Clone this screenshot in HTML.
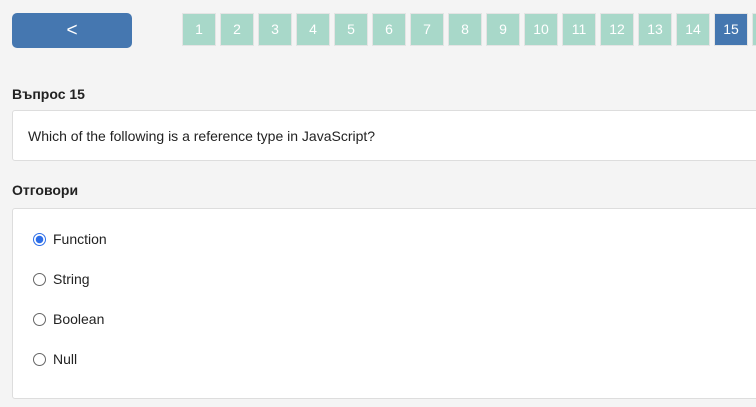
<!DOCTYPE html><html><head><style>
body{margin:0;background:#f4f4f4;font-family:"Liberation Sans",Arial,sans-serif;width:756px;height:407px;overflow:hidden;position:relative}
.btn{position:absolute;left:12px;top:13px;width:120px;height:35px;background:#4577b0;border-radius:5px;color:#fff;font-size:19px;text-align:center;line-height:35px}
.p{position:absolute;top:13px;width:32px;height:31px;border:1px solid #e4e4e4;background:#a8d8c9;color:#fff;font-size:14px;text-align:center;line-height:31px}
.p.a{background:#4577b0}
h3{position:absolute;left:12px;margin:0;font-size:14px;font-weight:bold;color:#222}
.box{position:absolute;left:12px;width:760px;background:#fff;border:1px solid #ddd;border-radius:3px}
.q{font-size:14px;color:#222}
.r{position:absolute;left:20px;font-size:14px;color:#222}
.r i{display:inline-block;width:13px;height:13px;border:1px solid #666;border-radius:50%;vertical-align:-2px;margin-right:7px;background:#fff;box-sizing:border-box}
.r i.c{border:1.5px solid #2d6ee8;background:radial-gradient(circle,#2d6ee8 0 3.5px,#fff 4px)}
</style></head><body>
<div class="btn">&lt;</div>
<div class="p" style="left:182px">1</div><div class="p" style="left:220px">2</div><div class="p" style="left:258px">3</div><div class="p" style="left:296px">4</div><div class="p" style="left:334px">5</div><div class="p" style="left:372px">6</div><div class="p" style="left:410px">7</div><div class="p" style="left:448px">8</div><div class="p" style="left:486px">9</div><div class="p" style="left:524px">10</div><div class="p" style="left:562px">11</div><div class="p" style="left:600px">12</div><div class="p" style="left:638px">13</div><div class="p" style="left:676px">14</div><div class="p a" style="left:714px">15</div><div class="p" style="left:752px"></div>
<h3 style="top:86px">Въпрос 15</h3>
<div class="box q" style="top:110px;height:51px;line-height:51px;padding-left:15px;box-sizing:border-box">Which of the following is a reference type in JavaScript?</div>
<h3 style="top:182px">Отговори</h3>
<div class="box" style="top:208px;height:191px;box-sizing:border-box">
<div class="r" style="top:22px"><i class="c"></i>Function</div>
<div class="r" style="top:62px"><i></i>String</div>
<div class="r" style="top:102px"><i></i>Boolean</div>
<div class="r" style="top:142px"><i></i>Null</div>
</div>
</body></html>
